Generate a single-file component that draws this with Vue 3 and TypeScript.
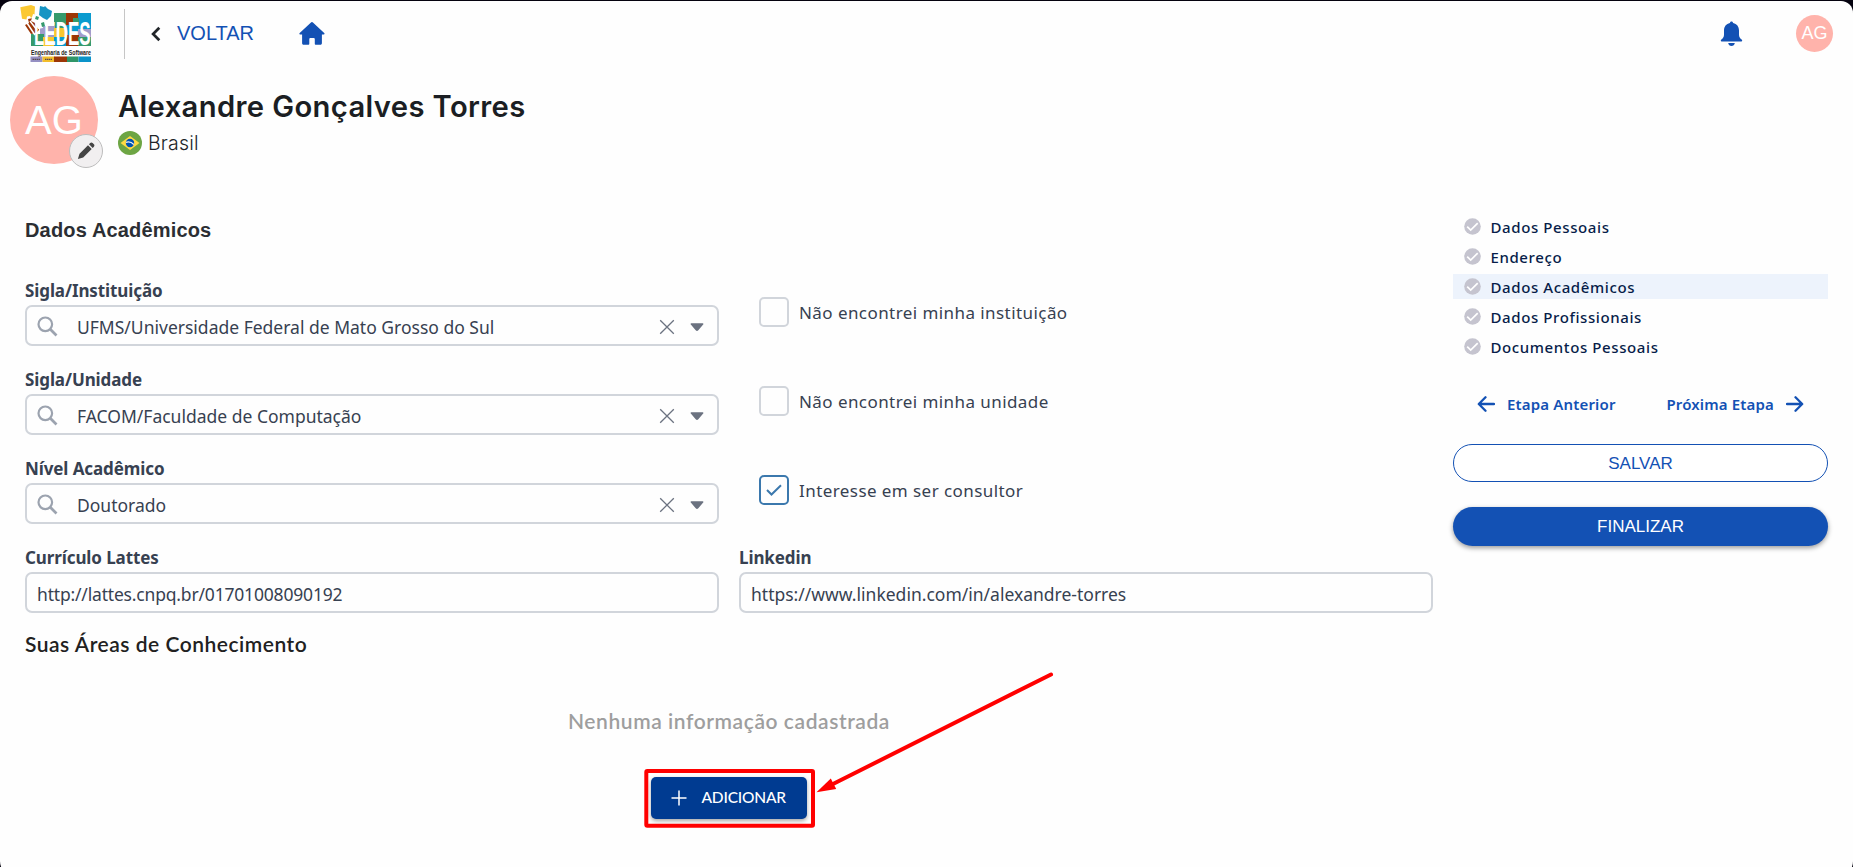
<script setup lang="ts">
import { reactive, ref } from 'vue'

interface SelectField {
  id: string
  label: string
  value: string
  option: string
  checked: boolean
}

const fields = reactive<SelectField[]>([
  { id: 'inst', label: 'Sigla/Instituição', value: 'UFMS/Universidade Federal de Mato Grosso do Sul', option: 'Não encontrei minha instituição', checked: false },
  { id: 'unid', label: 'Sigla/Unidade', value: 'FACOM/Faculdade de Computação', option: 'Não encontrei minha unidade', checked: false },
  { id: 'nivel', label: 'Nível Acadêmico', value: 'Doutorado', option: 'Interesse em ser consultor', checked: true },
])

const lattes = ref('http://lattes.cnpq.br/01701008090192')
const linkedin = ref('https://www.linkedin.com/in/alexandre-torres')

const steps: string[] = ['Dados Pessoais', 'Endereço', 'Dados Acadêmicos', 'Dados Profissionais', 'Documentos Pessoais']
const current = ref(2)
</script>

<template>
  <div class="frame">
    <div class="page">
      <header class="topbar">
        <svg class="logo" width="72" height="58" viewBox="20 5 72 58">
          <rect x="54" y="13" width="13" height="16" fill="#359a6c" />
          <rect x="66" y="13" width="13" height="13" fill="#9c3606" />
          <rect x="78" y="13" width="13" height="17" fill="#0a9bcf" />
          <rect x="73" y="18" width="6" height="8" fill="#359a6c" />
          <rect x="40" y="26" width="15" height="12" fill="#a29ccb" />
          <rect x="54" y="28" width="13" height="10" fill="#f8c72f" />
          <rect x="66" y="25" width="13" height="11" fill="#0a9bcf" />
          <rect x="78" y="29" width="13" height="9" fill="#a29ccb" />
          <rect x="31" y="34" width="13" height="12" fill="#359a6c" />
          <rect x="43" y="37" width="12" height="9" fill="#f8c72f" />
          <rect x="54" y="37" width="13" height="9" fill="#0a9bcf" />
          <rect x="66" y="35" width="13" height="11" fill="#9c3606" />
          <rect x="78" y="37" width="13" height="9" fill="#359a6c" />
          <path d="M20.300 7.200 31 5l4 1.500-.5 8.500-3.500 3-1-2-3 .5-.5 3-4.500-.8z" fill="#fbc832" />
          <path d="m40 6 4 1 1-1 3 3 4 2-1 5-4 4-4-2-4-3z" fill="#1594c4" />
          <path d="m25 25 4-2-1-4 5-1 4 5 2 7-3 3-5 1z" fill="#9c3606" />
          <path d="M33 14l4 1 1 4 4 2 1 7-5 1-3-6-4-2z" fill="#fff" />
          <path d="M36 16l3 1-1 3-3-1zM41 23l3-1 1 4-3 1z" fill="#359a6c" />
          <path d="m27 23 8 12m-5-14 7 9" stroke="#fff" stroke-width="1.500" />
          <text x="34" y="45" fill="#fff" font-family="'Liberation Sans', sans-serif" font-weight="700" font-size="33" textLength="56.500" lengthAdjust="spacingAndGlyphs">LEDES</text>
          <text x="31" y="54.500" fill="#222" font-family="'Liberation Sans', sans-serif" font-weight="700" font-size="7" textLength="60" lengthAdjust="spacingAndGlyphs">Engenharia de Software</text>
          <rect x="30.500" y="56.500" width="12" height="5.500" fill="#958fc2" />
          <rect x="42.500" y="56.500" width="12" height="5.500" fill="#f2bd2b" />
          <rect x="54" y="56.500" width="13" height="5.500" fill="#9c3606" />
          <rect x="67" y="56.500" width="11.500" height="5.500" fill="#2f9668" />
          <rect x="78.500" y="56.500" width="12.500" height="5.500" fill="#0a93c9" />
          <path d="M32.500 59.300h8M45 59.300h7" stroke="#5a4a50" stroke-width="1.200" stroke-dasharray="1.500 .5" />
        </svg>
        <span class="divider"></span>
        <a class="back">
          <svg width="10" height="16" viewBox="0 0 10 16"><path d="M8.300 1.800 2.100 8l6.200 6.200" fill="none" stroke="#212529" stroke-width="2.700" /></svg>
          <span>VOLTAR</span>
        </a>
        <svg class="home" width="26" height="24" viewBox="0 0 26 24">
          <path d="M11.700.7a1.800 1.800 0 0 1 2.500 0l11 10.200c.7.700.4 1.600-.5 1.600h-1.800v8.700c0 .9-.6 1.500-1.500 1.500h-4.600c-.6 0-1-.4-1-1v-4.500c0-.8-.5-1.300-1.300-1.300h-2.900c-.8 0-1.300.5-1.300 1.300v4.500c0 .6-.4 1-1 1H4.600c-.9 0-1.500-.6-1.500-1.500v-8.700H1.200c-.9 0-1.200-.9-.5-1.600z" fill="#1351b4" />
        </svg>
        <span class="grow"></span>
        <svg class="bell" width="23" height="26" viewBox="0 0 23 26">
          <path d="M11.500.4c.9 0 1.500.6 1.600 1.500 3.700.8 5.900 3.600 5.900 7.600v4.200c0 2.100 1 3.600 2.900 5.100.5.500.4 1.700-.5 1.700H1.600c-.9 0-1-1.200-.5-1.700C3 17.300 4 15.800 4 13.700V9.500c0-4 2.200-6.800 5.900-7.600.1-.9.700-1.500 1.600-1.500zM8.200 22h6.600c-.3 1.800-1.500 3-3.300 3s-3-1.200-3.300-3z" fill="#1351b4" />
        </svg>
        <span class="avatar small">AG</span>
      </header>

      <section class="profile">
        <div class="photo">
          <span class="avatar large">AG</span>
          <button class="edit" aria-label="Editar foto">
            <svg width="18" height="18" viewBox="0 0 18 18">
              <path d="m11 3.200 3.700 3.700-8.500 8.700L.9 17.100l1.600-5.300zM12 2.200l1.200-1.200c.7-.7 1.700-.7 2.400 0l1.300 1.300c.7.700.7 1.700 0 2.400L15.700 5.900z" fill="#444" />
            </svg>
          </button>
        </div>
        <div class="identity">
          <h1>Alexandre Gonçalves Torres</h1>
          <div class="country">
            <svg width="24" height="24" viewBox="0 0 24 24">
              <circle cx="12" cy="12" r="12" fill="#6da544" />
              <path d="M12 5 21.500 12 12 19 2.500 12z" fill="#ffda44" />
              <circle cx="12" cy="12" r="4.200" fill="#0052b4" />
              <path d="M8 11.300c2.800-.8 5.700 0 7.800 2.200" fill="none" stroke="#f0f0f0" stroke-width="1.200" />
            </svg>
            <span>Brasil</span>
          </div>
        </div>
      </section>

      <main class="content">
        <form class="form" @submit.prevent>
          <h2>Dados Acadêmicos</h2>
          <div v-for="f in fields" :key="f.id" class="row">
            <div class="field">
              <label :for="f.id">{{ f.label }}</label>
              <div class="control">
                <svg width="21" height="21" viewBox="0 0 21 21"><circle cx="8.300" cy="8.300" r="6.800" fill="none" stroke="#9ca3af" stroke-width="2.200" /><path d="m13.300 13.300 6.200 6.200" stroke="#9ca3af" stroke-width="2.700" /></svg>
                <input :id="f.id" v-model="f.value" class="picked" />
                <svg width="16" height="16" viewBox="0 0 16 16"><path d="m1.200 1.200 13.600 13.600m0-13.600L1.200 14.800" stroke="#6b7280" stroke-width="1.300" /></svg>
                <svg class="caret" width="14" height="8" viewBox="0 0 14 8"><path d="M1.300.2h11.400c.7 0 1 .8.500 1.300L8.300 7.200a1.800 1.800 0 0 1-2.600 0L.8 1.500C.3 1 .6.2 1.300.2z" fill="#6b7280" /></svg>
              </div>
            </div>
            <div class="check" @click="f.checked = !f.checked">
              <span class="box" :class="{ on: f.checked }">
                <svg v-if="f.checked" width="16" height="12" viewBox="0 0 16 12"><path d="m1 6 4.500 4.500L15 1.200" fill="none" stroke="#3b78ad" stroke-width="2" /></svg>
              </span>
              <span>{{ f.option }}</span>
            </div>
          </div>
          <div class="row">
            <div class="field">
              <label for="lattes">Currículo Lattes</label>
              <div class="control"><input id="lattes" v-model="lattes" class="lattes" /></div>
            </div>
            <div class="field">
              <label for="linkedin">Linkedin</label>
              <div class="control"><input id="linkedin" v-model="linkedin" /></div>
            </div>
          </div>
          <h3>Suas Áreas de Conhecimento</h3>
          <div class="empty">
            <p>Nenhuma informação cadastrada</p>
            <button class="add">
              <svg width="16" height="16" viewBox="0 0 16 16"><path d="M8 .5v15M.5 8h15" stroke="#fff" stroke-width="1.500" /></svg>
              <span>ADICIONAR</span>
            </button>
          </div>
        </form>

        <aside class="side">
          <ul>
            <li v-for="(s, i) in steps" :key="s" :class="{ active: i === current }" @click="current = i">
              <svg width="17" height="17" viewBox="0 0 17 17"><circle cx="8.500" cy="8.500" r="8.300" fill="#c5c4cf" /><path d="m3.200 8.600 3.500 3.500 7-7" fill="none" stroke="#fff" stroke-width="1.700" /></svg>
              <span>{{ s }}</span>
            </li>
          </ul>
          <nav class="pager">
            <a>
              <svg width="18" height="16" viewBox="0 0 18 16"><path d="M17 8H2M8.500 1.300 1.800 8l6.700 6.700" fill="none" stroke="#1351b4" stroke-width="2.300" stroke-linecap="round" stroke-linejoin="round" /></svg>
              <span>Etapa Anterior</span>
            </a>
            <a>
              <span>Próxima Etapa</span>
              <svg width="18" height="16" viewBox="0 0 18 16"><path d="M1 8h15M9.500 1.300 16.200 8l-6.700 6.700" fill="none" stroke="#1351b4" stroke-width="2.300" stroke-linecap="round" stroke-linejoin="round" /></svg>
            </a>
          </nav>
          <button class="save">SALVAR</button>
          <button class="finish">FINALIZAR</button>
        </aside>
      </main>

      <svg class="callout" width="1853" height="866" viewBox="0 1 1853 866">
        <rect x="646.300" y="771" width="166.700" height="54.700" rx="1" fill="none" stroke="#f00" stroke-width="4" />
        <path d="M1051 674.500 832 784.500" stroke="#f00" stroke-width="4" stroke-linecap="round" />
        <path d="m816.500 792.300 14.300-13.800 5.400 10.500z" fill="#f00" />
      </svg>
    </div>
  </div>
</template>

<style>
html,
body {
  margin: 0;
  background: #05030f;
  overflow: hidden;
}
</style>

<style scoped>
.frame {
  box-sizing: border-box;
  height: 867px;
  padding-top: 1px;
  overflow: hidden;
  background: #05030f;
  font-family: 'Noto Sans', sans-serif;
}
.page {
  position: relative;
  box-sizing: border-box;
  height: 876px;
  background: #fefefe;
  border-radius: 12px 12px 16px 16px;
}
button {
  margin: 0;
  padding: 0;
  border: 0;
  cursor: pointer;
}
svg {
  display: block;
  flex: none;
}
.topbar {
  display: flex;
  align-items: center;
  box-sizing: border-box;
  height: 66px;
  padding: 0 20px 0 20px;
}
.logo {
  overflow: visible;
}
.divider {
  width: 1px;
  height: 50px;
  margin-left: 32px;
  background: #c6c6c6;
}
.back {
  display: flex;
  align-items: center;
  margin-left: 26px;
  color: #1351b4;
  font: 20px/24px 'Liberation Sans', sans-serif;
}
.back span {
  margin: -3px 0 0 16px;
}
.home {
  margin: -1px 0 0 45px;
}
.grow {
  flex: 1;
}
.bell {
  margin: -1px 53px 0 0;
}
.avatar {
  display: flex;
  align-items: center;
  justify-content: center;
  border-radius: 50%;
  background: #ffb3ab;
  color: #fff;
  font-family: 'Liberation Sans', sans-serif;
}
.small {
  width: 37px;
  height: 37px;
  margin-top: -1px;
  font-size: 18px;
}
.large {
  width: 88px;
  height: 88px;
  font-size: 40px;
}
.profile {
  display: flex;
  box-sizing: border-box;
  height: 148px;
  padding: 9px 0 0 10px;
}
.photo {
  position: relative;
  width: 88px;
}
.edit {
  position: absolute;
  left: 59px;
  top: 58px;
  display: flex;
  align-items: center;
  justify-content: center;
  box-sizing: border-box;
  width: 34px;
  height: 34px;
  border: 1px solid #bdbdbd;
  border-radius: 50%;
  background: #f1eff0;
}
.identity {
  margin-left: 20px;
}
h1 {
  margin: 13px 0 0;
  color: #1b1e23;
  font: 600 29.2px/36px Inter, sans-serif;
  letter-spacing: 0.37px;
  white-space: nowrap;
}
.country {
  display: flex;
  align-items: center;
  height: 24px;
  margin-top: 6px;
  color: #212529;
  font: 300 19.5px/24px Inter, sans-serif;
  letter-spacing: 0.2px;
}
.country span {
  margin-left: 6px;
}
.content {
  display: flex;
  justify-content: space-between;
  padding: 0 25px;
}
.form {
  width: 1408px;
}
h2 {
  height: 60px;
  margin: 0;
  color: #2b2e33;
  font: 700 20px/30px 'Liberation Sans', sans-serif;
  letter-spacing: 0.16px;
}
.row {
  display: flex;
  gap: 20px;
  height: 89px;
}
.field {
  width: 694px;
}
label {
  display: block;
  height: 30px;
  color: #374151;
  font-size: 17px;
  font-weight: 700;
  line-height: 32px;
  letter-spacing: -0.1px;
  white-space: nowrap;
}
.control {
  display: flex;
  align-items: center;
  box-sizing: border-box;
  height: 41px;
  padding: 2px 13px 0 10px;
  border: 2px solid #d1d5db;
  border-radius: 7px;
}
.control input {
  flex: 1;
  min-width: 0;
  height: 30px;
  padding: 0;
  border: 0;
  outline: 0;
  background: transparent;
  color: #374151;
  font: 17.5px/30px 'Noto Sans', sans-serif;
}
.control .lattes {
  letter-spacing: -0.18px;
}
.control .picked {
  margin-left: 19px;
}
.caret {
  margin-left: 15px;
}
.check {
  display: flex;
  align-items: center;
  height: 30px;
  margin: 22px 0 0 20px;
  gap: 10px;
  color: #374151;
  font-size: 17px;
  letter-spacing: 0.43px;
}
.box {
  display: flex;
  align-items: center;
  justify-content: center;
  box-sizing: border-box;
  width: 30px;
  height: 30px;
  border: 2px solid #d1d5db;
  border-radius: 5px;
}
.box.on {
  border-color: #3b78ad;
}
h3 {
  margin: -2px 0 0;
  color: #212121;
  font: 600 21px/30px Lato, sans-serif;
  letter-spacing: 0.51px;
}
.empty {
  display: flex;
  flex-direction: column;
  align-items: center;
}
.empty p {
  margin: 47px 0 0;
  color: #9e9e9e;
  font: 600 21px/30px Lato, sans-serif;
  letter-spacing: 0.57px;
}
.add {
  display: flex;
  align-items: center;
  box-sizing: border-box;
  width: 156px;
  height: 42px;
  margin-top: 41px;
  padding-left: 19.5px;
  gap: 15px;
  border-radius: 5px;
  background: #003b91;
  box-shadow: 0 2px 4px rgba(0, 0, 0, 0.35);
  color: #fff;
  font: 500 15.5px/24px Lato, sans-serif;
  letter-spacing: -0.2px;
}
.add span {
  margin-top: -2px;
}
.side {
  width: 375px;
}
ul {
  display: flex;
  flex-direction: column;
  gap: 5px;
  margin: -1px 0 0;
  padding: 0;
  list-style: none;
}
li {
  display: flex;
  align-items: center;
  box-sizing: border-box;
  height: 25px;
  padding-left: 10.5px;
  gap: 10px;
  color: #071d49;
  font-size: 15px;
  font-weight: 500;
  letter-spacing: 0.6px;
}
li.active {
  background: #edf3fc;
}
.pager {
  display: flex;
  justify-content: space-between;
  height: 24px;
  margin-top: 33px;
  padding: 0 24px;
  color: #1351b4;
  font-size: 15px;
  font-weight: 600;
  letter-spacing: 0.16px;
}
.pager a {
  display: flex;
  align-items: center;
  gap: 12px;
}
.save,
.finish {
  display: block;
  box-sizing: border-box;
  width: 375px;
  border-radius: 20px;
  font: 17px/22px 'Liberation Sans', sans-serif;
}
.save {
  height: 38px;
  margin-top: 28px;
  padding-top: 1px;
  border: 1px solid #1351b4;
  background: #fff;
  color: #1351b4;
}
.finish {
  height: 39px;
  margin-top: 25px;
  background: #1351b4;
  box-shadow: 0 2px 5px rgba(0, 0, 0, 0.4);
  color: #fff;
}
.callout {
  position: absolute;
  left: 0;
  top: 0;
  pointer-events: none;
}
</style>
